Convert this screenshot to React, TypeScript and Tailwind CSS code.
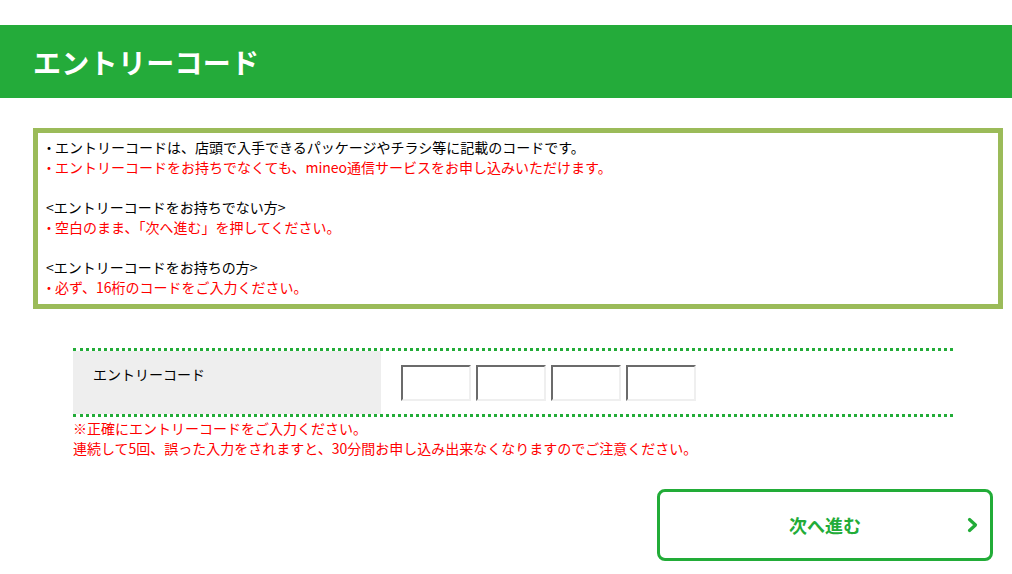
import React from "react";

const font = { fontFamily: '"Noto Sans CJK JP", "Noto Sans", sans-serif' };

function Bullet() {
  return <span className="ml-[-4px] mr-[-1px]">・</span>;
}

function CodeInput() {
  return (
    <input
      type="text"
      maxLength={4}
      className="w-[70px] h-[36px] border-2 border-solid border-t-[#6b6b6b] border-l-[#6b6b6b] border-b-[#efefef] border-r-[#efefef] bg-white outline-none px-1 text-sm"
    />
  );
}

export default function App() {
  return (
    <div className="min-h-screen bg-white pt-[25px] text-[14px] text-black" style={font}>
      {/* Header */}
      <header className="h-[73px] bg-[#24ab3a] flex items-center pl-[33px]">
        <h1 className="text-[28px] font-bold text-white leading-none tracking-[0.3px]">エントリーコード</h1>
      </header>

      {/* Info box */}
      <div className="mt-[30px] ml-[33px] w-[970px] border-[5px] border-[#9bbb59] pt-[4px] pb-[7px] px-[8px] leading-[20px]">
        <p><Bullet />エントリーコードは、店頭で入手できるパッケージやチラシ等に記載のコードです。</p>
        <p className="text-[#ff0000]"><Bullet />エントリーコードをお持ちでなくても、mineo通信サービスをお申し込みいただけます。</p>
        <div className="h-[20px]" />
        <p>&lt;エントリーコードをお持ちでない方&gt;</p>
        <p className="text-[#ff0000]"><Bullet />空白のまま、「次へ進む」を押してください。</p>
        <div className="h-[20px]" />
        <p>&lt;エントリーコードをお持ちの方&gt;</p>
        <p className="text-[#ff0000]"><Bullet />必ず、16桁のコードをご入力ください。</p>
      </div>

      {/* Form */}
      <div className="mt-[39px] ml-[73px] w-[880px]">
        <div className="flex border-t-[3px] border-b-[3px] border-dotted border-[#22ac38] h-[69px]">
          <div className="w-[308px] bg-[#eeeeee] pl-[20px] pt-[13px] leading-[20px]">エントリーコード</div>
          <div className="flex-1 flex gap-[5px] pl-[20px] pt-[14px]">
            <CodeInput />
            <CodeInput />
            <CodeInput />
            <CodeInput />
          </div>
        </div>
        <div className="text-[#ff0000] leading-[20px] pt-[1px]">
          <p>※正確にエントリーコードをご入力ください。</p>
          <p>連続して5回、誤った入力をされますと、30分間お申し込み出来なくなりますのでご注意ください。</p>
        </div>
      </div>

      {/* Next button */}
      <div className="mt-[31px] ml-[657px]">
        <button className="relative w-[336px] h-[72px] border-[3px] border-[#22ac38] rounded-[8px] bg-white flex items-center justify-center text-[18px] font-bold text-[#22ac38]">
          次へ進む
          <svg className="absolute right-[11px] top-1/2 -translate-y-1/2" width="12" height="15" viewBox="0 0 12 15" fill="none">
            <polyline points="2.5,2 8.5,7.5 2.5,13" stroke="#22ac38" strokeWidth="3.2" strokeLinecap="round" strokeLinejoin="round" />
          </svg>
        </button>
      </div>
    </div>
  );
}
